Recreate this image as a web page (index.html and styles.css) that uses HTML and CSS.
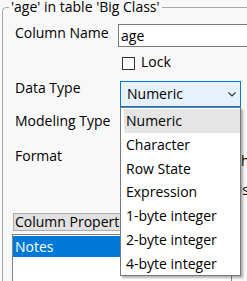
FILE: index.html
```html
<!DOCTYPE html>
<html lang="en">
<head>
  <meta charset="UTF-8" />
  <title>Column Info</title>
  <link rel="stylesheet" href="styles.css">
</head>
<body>
  <fieldset class="group">
    <legend>'age' in table 'Big Class'</legend>

    <div class="row row-name">
      <div class="label">Column Name</div>
      <div class="text-input">age</div>
    </div>

    <div class="row row-lock">
      <div class="label"></div>
      <span class="check"></span>
      <span>Lock</span>
    </div>

    <div class="row row-type">
      <div class="label">Data Type</div>
      <div class="combo">
        <span>Numeric</span>
        <svg class="chevron" width="8" height="5" viewBox="0 0 8 5">
          <polyline points="0.5,0.5 4,4 7.5,0.5" fill="none" stroke="#333" stroke-width="1.2" />
        </svg>
        <div class="dropdown">
          <div class="item selected">Numeric</div>
          <div class="item">Character</div>
          <div class="item">Row State</div>
          <div class="item">Expression</div>
          <div class="item">1-byte integer</div>
          <div class="item">2-byte integer</div>
          <div class="item">4-byte integer</div>
        </div>
      </div>
    </div>

    <div class="row row-model">
      <div class="label">Modeling Type</div>
    </div>

    <div class="row row-format">
      <div class="label">Format</div>
      <div class="format-opts">
        <div>Width</div>
        <div class="indent">Use thousands separator</div>
      </div>
    </div>

    <div class="props-head">Column Properties</div>
    <div class="props-list">
      <div class="props-item selected">Notes</div>
    </div>
  </fieldset>
</body>
</html>
```

FILE: styles.css
```css
* {
  box-sizing: border-box;
}

html, body {
  margin: 0;
  padding: 0;
  height: 100%;
  overflow: hidden;
}

body {
  background: #f8f8f8;
  font-family: "Open Sans", sans-serif;
  font-size: 14px;
  color: #000;
}

.group {
  margin: -3px 0 0 2px;
  padding: 0 0 0 12px;
  border: 1px solid #aaa;
  border-radius: 4px 0 0 0;
  width: 320px;
  height: 320px;
  min-width: 0;
}

.group legend {
  margin-left: -6px;
  padding: 0 2px;
  line-height: 20px;
}

.row {
  display: flex;
  align-items: flex-start;
  line-height: 20px;
}

.label {
  width: 103px;
  flex: none;
}

.row-name {
  margin-top: 6px;
}

.text-input {
  margin-top: 1px;
  width: 200px;
  height: 23px;
  padding-left: 2px;
  line-height: 21px;
  background: #fff;
  border: 1px solid #7a7a7a;
}

.row-lock {
  margin-top: 5px;
}

.check {
  width: 13px;
  height: 13px;
  margin: 5px 6px 0 4px;
  background: #fff;
  border: 1px solid #333;
}

.row-type {
  margin-top: 6px;
}

.combo {
  position: relative;
  margin: 3px 0 0 2px;
  width: 121px;
  height: 26px;
  padding-left: 6px;
  line-height: 24px;
  background: #e5f1fb;
  border: 1px solid #0078d7;
}

.chevron {
  position: absolute;
  right: 4px;
  top: 10px;
}

.dropdown {
  position: absolute;
  top: 25px;
  left: -1px;
  width: 121px;
  padding-top: 1px;
  background: #fff;
  border: 1px solid #7a7a7a;
  box-shadow: 2px 2px 2px rgba(0,0,0,0.3);
  z-index: 10;
}

.item {
  margin-left: 3px;
  padding-left: 2px;
  height: 23.75px;
  line-height: 23.75px;
  white-space: nowrap;
}

.item.selected {
  background: #e5e5e5;
}

.row-model {
  margin-top: 4px;
}

.row-format {
  margin-top: 15px;
}

.format-opts {
  margin: 5px 0 0 93px;
  white-space: nowrap;
}

.format-opts .indent {
  margin-top: 9px;
  padding-left: 21px;
}

.props-head {
  margin: 13px 0 0 -2px;
  width: 220px;
  height: 18px;
  padding-left: 1px;
  line-height: 16px;
  background: #e1e1e1;
  border: 1px solid #adadad;
  white-space: nowrap;
  overflow: hidden;
}

.props-list {
  margin: 3px 0 0 -3px;
  width: 220px;
  height: 100px;
  padding: 1px 0 0 0;
  background: #fff;
  border: 1px solid #828282;
}

.props-item {
  height: 21px;
  padding-left: 2px;
  line-height: 21px;
}

.props-item.selected {
  background: #0078d7;
  color: #fff;
}
```
